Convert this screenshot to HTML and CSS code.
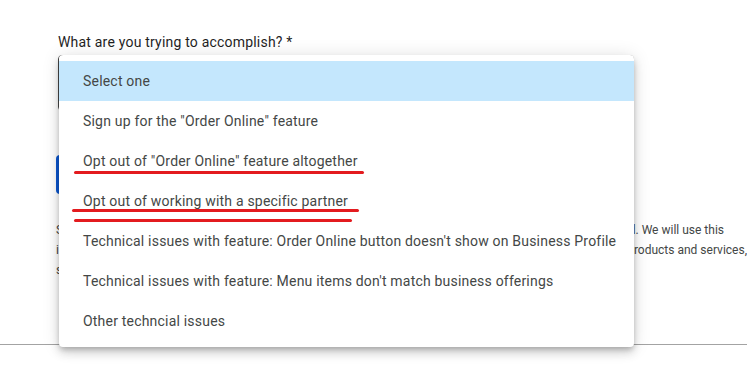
FILE: index.html
```html
<!DOCTYPE html>
<html lang="en">
<head>
<meta charset="utf-8">
<title>Order Online form</title>
<link rel="stylesheet" href="styles.css">
</head>
<body>
<div class="page">
  <form class="form">
    <label class="label">What are you trying to accomplish? *</label>
    <div class="select"></div>
    <button type="button" class="btn">Next</button>
    <div class="help">
      <p class="line line1"><span>Share the name of the partner and the reason it should be remove</span><span>d. We will use this</span></p>
      <p class="line line2"><span>information to review your request and improve how we show your p</span><span>roducts and services,</span></p>
      <p class="line line3"><span>so please include as much detail as you can.</span></p>
    </div>
  </form>
  <hr class="rule">

  <ul class="menu">
    <li class="item selected">Select one</li>
    <li class="item">Sign up for the "Order Online" feature</li>
    <li class="item">Opt out of "Order Online" feature altogether</li>
    <li class="item">Opt out of working with a specific partner</li>
    <li class="item">Technical issues with feature: Order Online button doesn't show on Business Profile</li>
    <li class="item">Technical issues with feature: Menu items don't match business offerings</li>
    <li class="item">Other techncial issues</li>
  </ul>

  <span class="mark mark1"></span>
  <span class="mark mark2"></span>
  <span class="mark mark3"></span>
</div>
</body>
</html>
```

FILE: styles.css
```css
* { box-sizing: border-box; }
html, body {
  margin: 0;
  padding: 0;
  background: #ffffff;
  font-family: Roboto, "Noto Sans", "Liberation Sans", sans-serif;
  overflow: hidden;
}
.page {
  position: relative;
  width: 747px;
  height: 376px;
}
.form {
  padding: 32px 0 0 56px;
  display: flex;
  flex-direction: column;
  align-items: flex-start;
}
.label {
  margin-left: 2px;
  font-size: 14px;
  line-height: 20px;
  letter-spacing: 0.2px;
  color: #1f1f1f;
}
.select {
  margin-top: 3px;
  margin-left: 2px;
  width: 576px;
  height: 56px;
  border: 1px solid #474747;
  border-radius: 4px;
}
.btn {
  margin-top: 44px;
  width: 90px;
  height: 39px;
  border: 0;
  border-radius: 4px;
  background: #0b57d0;
  color: #fff;
  font-family: inherit;
  font-size: 14px;
}
.help {
  margin-top: 26px;
  font-size: 12px;
  line-height: 20px;
  color: #444746;
}
.line {
  margin: 0;
  display: flex;
  justify-content: space-between;
  white-space: nowrap;
}
.line1 { width: 668px; }
.line2 { width: 691px; }
.rule {
  margin: 64px 0 0 0;
  border: 0;
  border-top: 1px solid #a3a3a3;
  height: 0;
}
.menu {
  position: absolute;
  left: 59px;
  top: 55px;
  width: 575px;
  margin: 0;
  padding: 6px 0;
  list-style: none;
  background: #fff;
  border-radius: 4px;
  box-shadow: 0 3px 5px -1px rgba(0,0,0,.2), 0 6px 10px 0 rgba(0,0,0,.14), 0 1px 18px 0 rgba(0,0,0,.12);
}
.item {
  height: 40px;
  padding: 0 24px;
  display: flex;
  align-items: center;
  font-size: 14px;
  letter-spacing: 0.2px;
  color: #444746;
  white-space: nowrap;
}
.item.selected {
  background: #c4e7fd;
}
.mark {
  position: absolute;
  height: 3px;
  background: #e31b1f;
  border-radius: 2px;
}
.mark1 { left: 74px; top: 171px; width: 290px; }
.mark2 { left: 72px; top: 209px; width: 287px; }
.mark3 { left: 74px; top: 219px; width: 278px; }
```
